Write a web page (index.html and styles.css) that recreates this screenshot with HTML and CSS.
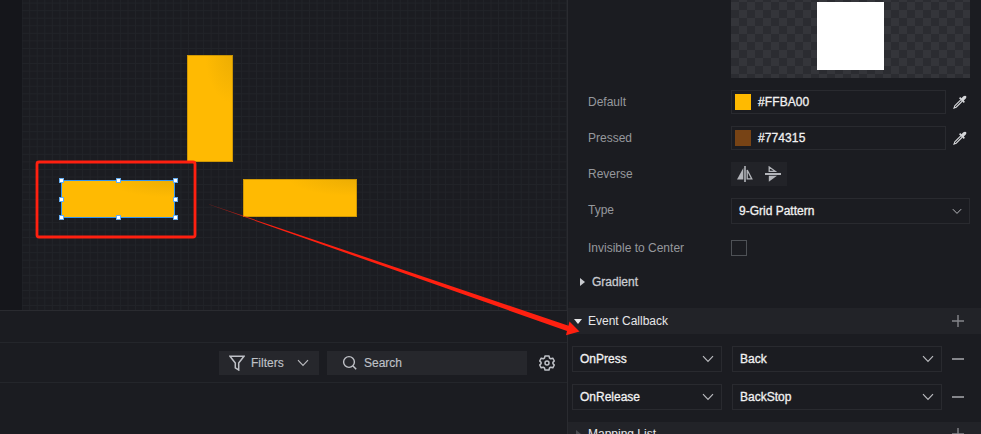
FILE: index.html
```html
<!DOCTYPE html>
<html lang="en">
<head>
<meta charset="utf-8">
<title>Editor</title>
<link rel="stylesheet" href="styles.css">
</head>
<body>
<svg class="defs" width="0" height="0">
  <symbol id="chev" viewBox="0 0 12 8"><path d="M1 1.2 6 6.3 11 1.2" fill="none" stroke="currentColor" stroke-width="1.2"/></symbol>
  <symbol id="plus" viewBox="0 0 12 12"><path d="M6 0v12M0 6h12" fill="none" stroke="currentColor" stroke-width="1.4"/></symbol>
  <symbol id="minus" viewBox="0 0 12 12"><path d="M0 6h12" fill="none" stroke="currentColor" stroke-width="2"/></symbol>
  <symbol id="dropper" viewBox="0 0 14 14"><path d="M8 4.6 1.8 10.8 1 13l2.2-.8L9.4 6" fill="none" stroke="currentColor" stroke-width="1.1"/><path d="M6 3.2 7.2 2.1 8.4 3.2 10.4 1.2Q12 .2 13 1.1T12.8 3.6L10.8 5.6 11.9 6.8 10.8 7.9Z" fill="currentColor"/></symbol>
</svg>
<div class="app">
  <main class="left">
    <div class="canvas">
      <div class="sheet"></div>
      <div class="block tall"></div>
      <div class="block wide"></div>
      <div class="block chosen">
        <i></i><i></i><i></i><i></i><i></i><i></i><i></i><i></i>
      </div>
    </div>
    <div class="strip"></div>
    <div class="toolbar">
      <div class="filters">
        <svg width="16" height="16" viewBox="0 0 16 16"><path d="M1 1.2H15L9.7 8V15L6.3 12.9V8Z" fill="none" stroke="currentColor" stroke-width="1.5"/></svg>
        <span>Filters</span>
        <svg class="chev" width="12" height="8"><use href="#chev"/></svg>
      </div>
      <div class="search">
        <svg width="16" height="16" viewBox="0 0 16 16"><circle cx="7" cy="7" r="5.4" fill="none" stroke="currentColor" stroke-width="1.4"/><path d="m11 11 3.2 3.2" stroke="currentColor" stroke-width="1.5"/></svg>
        <span>Search</span>
      </div>
      <svg class="gear" width="16" height="16" viewBox="0 0 16 16"><path d="M6 1h4l.5 2 1.3.8 2-.6 1.5 2.8-1.4 1.4v1.2l1.4 1.4-1.5 2.8-2-.6-1.3.8L10 15H6l-.5-2-1.3-.8-2 .6L.7 10l1.4-1.4V7.4L.7 6l1.5-2.8 2 .6L5.5 3Z" fill="none" stroke="currentColor" stroke-width="1.5" stroke-linejoin="round"/><circle cx="8" cy="8" r="2" fill="none" stroke="currentColor" stroke-width="1.5"/></svg>
    </div>
    <div class="list"></div>
  </main>
  <aside class="panel">
    <div class="preview"><div class="swatch"></div></div>
    <div class="row"><label>Default</label><div class="color"><b class="amber"></b><span>#FFBA00</span></div><svg class="drop" width="14" height="14"><use href="#dropper"/></svg></div>
    <div class="row"><label>Pressed</label><div class="color"><b class="brown"></b><span>#774315</span></div><svg class="drop" width="14" height="14"><use href="#dropper"/></svg></div>
    <div class="row"><label>Reverse</label><div class="flip">
      <svg width="16" height="16" viewBox="0 0 16 16"><path d="M6.3 2v11.5H0Z" fill="currentColor"/><path d="M8 0v16" stroke="currentColor" stroke-width="1.6"/><path d="M10.2 4v8.9h4.6Z" fill="none" stroke="currentColor" stroke-width="1.3"/></svg>
      <svg width="16" height="16" viewBox="0 0 16 16"><path d="M4.2 1v4.3h6Z" fill="none" stroke="currentColor" stroke-width="1.3"/><path d="M0 8h16" stroke="currentColor" stroke-width="2"/><path d="M3.8 9.8h8.2L3.8 15.8Z" fill="currentColor"/></svg>
    </div></div>
    <div class="row type"><label>Type</label><div class="select"><span>9-Grid Pattern</span><svg class="chev" width="10" height="7"><use href="#chev"/></svg></div></div>
    <div class="row check"><label>Invisible to Center</label><div class="box"></div></div>
    <div class="gradient"><svg width="5" height="8" viewBox="0 0 5 8"><path d="M0 0 5 4 0 8Z" fill="currentColor"/></svg><span>Gradient</span></div>
    <div class="head first"><svg class="down" width="8" height="5" viewBox="0 0 8 5"><path d="M0 0h8L4 5Z" fill="currentColor"/></svg><span>Event Callback</span><svg class="sign" width="12" height="12"><use href="#plus"/></svg></div>
    <div class="events">
      <div class="event"><div class="select"><span>OnPress</span><svg class="chev" width="12" height="8"><use href="#chev"/></svg></div><div class="select"><span>Back</span><svg class="chev" width="12" height="8"><use href="#chev"/></svg></div><svg class="sign" width="12" height="12"><use href="#minus"/></svg></div>
      <div class="event"><div class="select"><span>OnRelease</span><svg class="chev" width="12" height="8"><use href="#chev"/></svg></div><div class="select"><span>BackStop</span><svg class="chev" width="12" height="8"><use href="#chev"/></svg></div><svg class="sign" width="12" height="12"><use href="#minus"/></svg></div>
    </div>
    <div class="head last"><svg class="side" width="5" height="8" viewBox="0 0 5 8"><path d="M0 0 5 4 0 8Z" fill="currentColor"/></svg><span>Mapping List</span><svg class="sign" width="12" height="12"><use href="#plus"/></svg></div>
  </aside>
  <svg class="marks" width="981" height="434" viewBox="0 0 981 434">
    <defs><linearGradient id="fade" gradientUnits="userSpaceOnUse" x1="208" y1="204" x2="270" y2="225"><stop stop-color="#ff2010" stop-opacity=".4"/><stop offset="1" stop-color="#ff2010"/></linearGradient></defs>
    <rect x="37" y="162" width="158" height="75" rx="2" fill="none" stroke="#ff2010" stroke-width="2.8"/>
    <path d="M209 204.2 568.5 325.8 569.5 321.5 579.5 331.5 566 335.2 567 331 209 204.5Z" fill="url(#fade)"/>
  </svg>
</div>
</body>
</html>
```

FILE: styles.css
```css
* { box-sizing: border-box; }
body { margin: 0; background: #1b1c21; color: #c9cbd0; font: 12px/16px "Liberation Sans", Arial, sans-serif; overflow: hidden; }
svg { display: block; flex: none; }
.defs { position: absolute; }
.app { position: relative; display: flex; width: 981px; height: 434px; overflow: hidden; }
.left { width: 568px; flex: none; border-right: 1px solid #2a2b30; display: flex; flex-direction: column; }
.canvas { position: relative; height: 311px; padding-left: 22px; background: #15161b; border-bottom: 1px solid #2a2b30; }
.sheet { height: 310px; background-color: #1b1c21; background-image: linear-gradient(#212328 1px, transparent 1px), linear-gradient(90deg, #212328 1px, transparent 1px); background-size: 7.57px 7.57px; background-position: 0 2.6px, 7.2px 0; }
.block { position: absolute; background: radial-gradient(ellipse 60% 45% at 100% 0, #ecad03 0, #ffba02 100%); box-shadow: inset 0 0 0 1px rgba(120, 90, 10, .35); }
.tall { left: 187px; top: 55px; width: 46px; height: 107px; }
.wide { left: 243px; top: 179px; width: 114px; height: 38px; }
.chosen { left: 61px; top: 180px; width: 114px; height: 38px; border: 1px solid #3494ed; box-shadow: none; }
.chosen i { position: absolute; width: 5px; height: 5px; background: #fff; border: 1px solid #65adf0; }
.chosen i:nth-child(-n+3) { top: -3px; }
.chosen i:nth-child(n+4):nth-child(-n+6) { bottom: -3px; }
.chosen i:nth-child(n+7) { top: 16px; }
.chosen i:nth-child(3n+1) { left: -3px; }
.chosen i:nth-child(3n+2) { left: 54px; }
.chosen i:nth-child(3n) { left: 111px; }
.chosen i:nth-child(8) { left: 111px; }
.strip { height: 32px; border-bottom: 1px solid #24262b; }
.toolbar { height: 40px; display: flex; justify-content: flex-end; align-items: center; padding-right: 12px; border-bottom: 1px solid #24262b; }
.filters, .search { height: 24px; display: flex; align-items: center; background: #26272c; color: #bfc1c7; }
.filters { width: 100px; padding: 0 10px; margin-right: 8px; }
.filters span { margin: 0 auto 0 6px; }
.search { width: 200px; padding-left: 15px; gap: 6px; margin-right: 12px; }
.filters span, .search span { -webkit-text-stroke: .15px currentColor; }
.gear { color: #bfc1c7; }
.chev { color: #b9babe; }
.panel { width: 413px; flex: none; }
.preview { height: 78px; margin: 0 11px 6px 163px; padding: 2px 0 0 86px; background: repeating-conic-gradient(#2b2c31 0 25%, #34353a 0 50%) 0 2px / 16px 16px; }
.swatch { width: 67px; height: 68px; background: #fff; }
.row { height: 36px; display: flex; align-items: center; padding-left: 20px; }
.row label { width: 143px; color: #96989d; }
.color { width: 215px; height: 24px; display: flex; align-items: center; border: 1px solid #292a2f; padding-left: 3px; color: #f1f1f1; letter-spacing: .1px; }
.color b { width: 16px; height: 16px; margin-right: 7px; }
.color span, .select span, .gradient span { -webkit-text-stroke: .3px currentColor; }
.amber { background: #ffba00; }
.brown { background: #774315; }
.drop { margin-left: 7px; color: #d4d5d8; }
.flip { display: flex; align-items: center; gap: 12px; width: 56px; height: 24px; padding-left: 6px; background: #222328; color: #b3b5ba; }
.select { display: flex; align-items: center; justify-content: space-between; height: 26px; border: 1px solid #292a2f; padding: 0 7px; color: #f1f1f1; }
.type { height: 38px; }
.type label { padding-bottom: 2px; }
.type .select { width: 239px; }
.check { height: 36px; }
.box { width: 16px; height: 16px; border: 1px solid #4e5156; }
.gradient { height: 32px; display: flex; align-items: center; gap: 7px; padding-left: 12px; }
.head { height: 26px; display: flex; align-items: center; background: #222328; padding: 0 17px 0 6px; color: #e6e6e8; }
.head.first { margin-top: 10px; }
.head.last { height: 24px; }
.head span { margin-right: auto; }
.down { margin-right: 6px; }
.side { margin: 0 7px 0 2px; color: #4a4c51; }
.sign { color: #85868b; }
.events { padding: 12px 0 12px 4px; display: grid; gap: 12px; }
.event { display: flex; align-items: center; }
.event .select:first-child { width: 150px; margin-right: 10px; }
.event .select:nth-child(2) { width: 210px; margin-right: 10px; }
.marks { position: absolute; left: 0; top: 0; }
```
